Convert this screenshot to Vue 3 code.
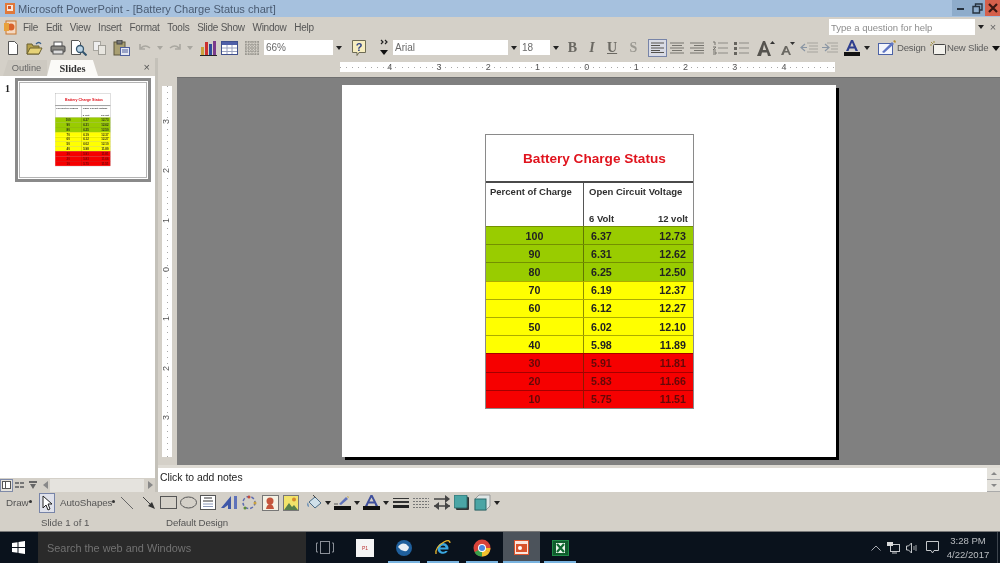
<script setup>
const rows = [
  ['100', '6.37', '12.73', 'green'], ['90', '6.31', '12.62', 'green'], ['80', '6.25', '12.50', 'green'],
  ['70', '6.19', '12.37', 'yellow'], ['60', '6.12', '12.27', 'yellow'], ['50', '6.02', '12.10', 'yellow'],
  ['40', '5.98', '11.89', 'yellow'], ['30', '5.91', '11.81', 'red'], ['20', '5.83', '11.66', 'red'], ['10', '5.75', '11.51', 'red']
]
const menus = ['File', 'Edit', 'View', 'Insert', 'Format', 'Tools', 'Slide Show', 'Window', 'Help']
const hnums = ['4', '3', '2', '1', '0', '1', '2', '3', '4']
const vnums = ['3', '2', '1', '0', '1', '2', '3']
</script>

<template>
  <div class="screen">
    <header class="titlebar">
      <svg class="tapp" width="10" height="11" viewBox="0 0 10 11"><rect width="10" height="11" fill="#e0793a"/><rect x="2" y="2" width="6" height="6" fill="#f7e6d8"/><rect x="3" y="3" width="3" height="3" fill="#d2552a"/></svg>
      <span class="ttext">Microsoft PowerPoint - [Battery Charge Status chart]</span>
      <div class="winbtns">
        <span class="wb wmin"><i class="minbar"></i></span>
        <span class="wb wmax"><svg width="11" height="11" viewBox="0 0 11 11"><path d="M3.5 3V1h6.5v6H8M1 3.5h6.5V10H1z" fill="none" stroke="#26323f" stroke-width="1.4"/></svg></span>
        <span class="wb wclose"><svg width="10" height="10" viewBox="0 0 10 10"><path d="M1 1l8 8M9 1l-8 8" stroke="#3a1712" stroke-width="2.2"/></svg></span>
      </div>
    </header>

    <nav class="menubar">
      <svg class="mapp" width="14" height="15" viewBox="0 0 14 15"><rect x="2" y="1" width="10" height="13" fill="#f4d9c2" stroke="#c9762f"/><circle cx="7" cy="7" r="3.5" fill="#d9622c"/><rect x="0" y="3" width="5" height="8" fill="#e8a13a"/></svg>
      <div class="menus"><span v-for="m in menus" :key="m" class="menu">{{ m }}</span></div>
      <div class="helpbox"><span class="helptext">Type a question for help</span></div>
      <span class="dd helpdd"><i class="tri"></i></span>
      <span class="helpx">×</span>
    </nav>

    <div class="toolbar">
      <svg class="g8" width="10" height="14" viewBox="0 0 10 14"><path d="M.5.5h6l3 3v10H.5z" fill="#fff" stroke="#555"/></svg>
      <svg class="g8" width="17" height="14" viewBox="0 0 17 14"><path d="M1 3h5l1 2h6v8H1z" fill="#b7a24c" stroke="#6b6130"/><path d="M1 13l3-6h12l-3 6z" fill="#e6d277" stroke="#6b6130"/><path d="M10 3q3-3 5 0" fill="none" stroke="#39608c" stroke-width="1.3"/></svg>
      <svg class="g7" width="16" height="14" viewBox="0 0 16 14"><rect x="4" y="1" width="8" height="5" fill="#fff" stroke="#555"/><rect x="1" y="5" width="14" height="6" rx="1" fill="#8c8a84" stroke="#444"/><rect x="3" y="9" width="10" height="4" fill="#ddd" stroke="#555"/></svg>
      <svg class="g4" width="17" height="16" viewBox="0 0 17 16"><path d="M1.500.5h7l2 2v12h-9z" fill="#fff" stroke="#555"/><circle cx="10" cy="9" r="3.500" fill="#bcd5e6" stroke="#35566f" stroke-width="1.300"/><path d="M12.500 11.500l4 4" stroke="#35566f" stroke-width="2"/></svg>
      <svg class="g6" width="13" height="14" viewBox="0 0 13 14"><rect x=".5" y=".5" width="7" height="9" fill="#eee" stroke="#a8a69f"/><rect x="5.500" y="4.500" width="7" height="9" fill="#e8e6e0" stroke="#a09e97"/></svg>
      <svg class="g7" width="17" height="16" viewBox="0 0 17 16"><rect x="1" y="2" width="11" height="13" fill="#a99f72" stroke="#5c573f"/><rect x="4" y="0" width="5" height="4" fill="#777" stroke="#444"/><rect x="7.500" y="7.500" width="9" height="8" fill="#e4e7f2" stroke="#4f5f9c"/><path d="M9 10h6M9 12h6" stroke="#4f5f9c"/></svg>
      <svg class="g9" width="13" height="10" viewBox="0 0 13 10"><path d="M1 1v5h5M2 5q4-4 9 0" fill="none" stroke="#a9a7a0" stroke-width="1.600"/></svg>
      <i class="tri dim g5"></i>
      <svg class="g5" width="13" height="10" viewBox="0 0 13 10"><path d="M12 1v5H7M11 5Q7 1 2 5" fill="none" stroke="#a9a7a0" stroke-width="1.600"/></svg>
      <i class="tri dim g6"></i>
      <svg class="g7" width="17" height="16" viewBox="0 0 17 16"><rect x="1" y="7" width="3" height="8" fill="#c9a13b"/><rect x="5" y="2" width="3" height="13" fill="#cc2f2f"/><rect x="9" y="4" width="3" height="11" fill="#2f4c9c"/><rect x="13" y="1" width="3" height="14" fill="#7a3a8c"/><path d="M0 15.500h17" stroke="#222"/></svg>
      <svg class="g4" width="17" height="14" viewBox="0 0 17 14"><rect x=".5" y=".5" width="16" height="13" fill="#fff" stroke="#3f4f8c"/><rect x="1" y="1" width="15" height="3" fill="#4f5fa8"/><path d="M1 7h15M1 10.500h15M6 4v9M11 4v9" stroke="#9aa2c0"/></svg>
      <svg class="g7" width="14" height="14" viewBox="0 0 14 14"><path d="M1 0v14M4 0v14M7 0v14M10 0v14M13 0v14M0 1h14M0 4h14M0 7h14M0 10h14M0 13h14" stroke="#86847e" stroke-dasharray="1.500 1"/></svg>
      <div class="combo zoomc g5"><span>66%</span></div><span class="dd"><i class="tri"></i></span>
      <svg class="g7" width="16" height="18" viewBox="0 0 16 18"><path d="M1.500 1.500h13v12H8l-2 3v-3H1.500z" fill="#f6edc0" stroke="#6d6b55"/><text x="8" y="11.500" text-anchor="middle" font-family="Liberation Sans" font-weight="700" font-size="11" fill="#2b3f85">?</text></svg>
      <svg class="g13" width="8" height="17" viewBox="0 0 8 17"><path d="M1 1l2 2-2 2M5 1l2 2-2 2" fill="none" stroke="#222" stroke-width="1.200"/><path d="M0 11h8l-4 5z" fill="#111"/></svg>
      <div class="combo fontc g5"><span>Arial</span></div><span class="dd dd12"><i class="tri"></i></span>
      <div class="combo sizec"><span>18</span></div><span class="dd dd12"><i class="tri"></i></span>
      <b class="fmt fb g5">B</b><i class="fmt fi g9">I</i><span class="fmt fu g10">U</span><span class="fmt fs g11">S</span>
      <span class="alignbox g9"><svg width="13" height="11" viewBox="0 0 13 11"><path d="M0 1h13M0 3.500h9M0 6h13M0 8.500h9M0 10.500h13" stroke="#55534e" stroke-width="1.200"/></svg></span>
      <svg class="g2" width="16" height="12" viewBox="0 0 16 12"><path d="M1 1h14M3 3.500h10M1 6h14M3 8.500h10M1 11h14" stroke="#77756f" stroke-width="1.200"/></svg>
      <svg class="g4" width="16" height="12" viewBox="0 0 16 12"><path d="M1 1h14M5 3.500h10M1 6h14M5 8.500h10M1 11h14" stroke="#77756f" stroke-width="1.200"/></svg>
      <svg class="g7" width="16" height="14" viewBox="0 0 16 14"><path d="M6 2h10M6 7h10M6 12h10" stroke="#8d8b85" stroke-width="1.200"/><path d="M1 1h2v3M1 6h3l-3 3h3M1 11h3v2H1" fill="none" stroke="#77756f"/></svg>
      <svg class="g5" width="16" height="14" viewBox="0 0 16 14"><path d="M6 2h10M6 7h10M6 12h10" stroke="#8d8b85" stroke-width="1.200"/><path d="M1 1h3v3H1zM1 6h3v3H1zM1 11h3v3H1z" fill="#66645e"/></svg>
      <svg class="g8" width="18" height="16" viewBox="0 0 18 16"><path d="M0 16L6 1h2l6 15h-3l-1-3.500H5L4 16zM5.800 10h3.400L7 4.500z" fill="#55534e"/><path d="M13 4l2.500-3L18 4z" fill="#333"/></svg>
      <svg class="g5" width="15" height="14" viewBox="0 0 15 14"><path d="M1 14L5 5h2l4 9H9l-1-2.500H4.500L3.500 14zM5.200 10h2.200L6.300 7z" fill="#6a6862"/><path d="M10 1h5l-2.500 3z" fill="#333"/></svg>
      <svg class="g5" width="18" height="13" viewBox="0 0 18 13"><path d="M7 2h11M9 5h9M9 8h9M7 11h11" stroke="#a6a49d" stroke-width="1.200"/><path d="M5 3L1 6.500 5 10M1 6.500h6" fill="none" stroke="#8a96a4" stroke-width="1.200"/></svg>
      <svg class="g4" width="16" height="13" viewBox="0 0 16 13"><path d="M5 2h11M9 5h7M9 8h7M5 11h11" stroke="#a6a49d" stroke-width="1.200"/><path d="M3 3l4 3.500L3 10M0 6.500h7" fill="none" stroke="#8a96a4" stroke-width="1.200"/></svg>
      <svg class="g6" width="16" height="16" viewBox="0 0 16 16"><path d="M2 11L7 0h2l5 11h-2.500l-1-2.500h-5L4.500 11zM6.300 6.500h3.400L8 2.500z" fill="#2f3f8f"/><rect y="12" width="16" height="4" fill="#111"/></svg>
      <i class="tri g4"></i>
      <svg class="g8" width="19" height="17" viewBox="0 0 19 17"><rect x=".5" y="4.500" width="14" height="11" fill="#f3f5fb" stroke="#4c62a6"/><path d="M4 13L14 3l2 2L6 14z" fill="#5f75c4"/><path d="M15 2l2-1 1 2-1 1z" fill="#b58b2c"/></svg>
      <span class="tbtext design">Design</span>
      <svg class="g5" width="16" height="14" viewBox="0 0 16 14"><rect x="3.500" y="3.500" width="12" height="10" rx="1" fill="#f2f1ec" stroke="#444"/><path d="M1 1l2 2M4 0v2M0 4h2" stroke="#a08f3e"/></svg>
      <span class="tbtext newslide g1">New Slide</span>
      <svg class="g5" width="8" height="6" viewBox="0 0 8 6"><path d="M0 1h8L4 6z" fill="#111"/></svg>
    </div>

    <main class="middle">
      <aside class="leftpane">
        <div class="tabs">
          <span class="tab outline">Outline</span>
          <span class="tab slides">Slides</span>
          <span class="tabx">×</span>
        </div>
        <div class="thumbs">
          <span class="thumbnum">1</span>
          <div class="thumb">
            <div class="chart mini">
              <div class="c-title">Battery Charge Status</div>
              <div class="c-head"><div class="c-h1">Percent of Charge</div><div class="c-h2"><div>Open Circuit Voltage</div><div class="c-volts"><span>6 Volt</span><span>12 volt</span></div></div></div>
              <div v-for="r in rows" :key="r[0]" class="c-row" :class="r[3]"><span class="c-pct">{{ r[0] }}</span><span class="c-six">{{ r[1] }}</span><span class="c-twelve">{{ r[2] }}</span></div>
            </div>
          </div>
        </div>
        <div class="viewbar">
          <span class="vb vbon"><svg width="9" height="8" viewBox="0 0 9 8"><rect x=".5" y=".5" width="8" height="7" fill="#fff" stroke="#555"/><path d="M3.500 1v6" stroke="#555"/></svg></span>
          <span class="vb"><svg width="9" height="8" viewBox="0 0 9 8"><path d="M0 1h4v2H0zM5 1h4v2H5zM0 5h4v2H0zM5 5h4v2H5z" fill="#777"/></svg></span>
          <span class="vb"><svg width="8" height="8" viewBox="0 0 8 8"><path d="M0 0h8v2H0zM1 3h6L4 8z" fill="#666"/></svg></span>
          <span class="sb-arrow"><i class="tl"></i></span>
          <span class="sb-track"></span>
          <span class="sb-arrow"><i class="tr"></i></span>
        </div>
      </aside>

      <section class="rightpane">
        <div class="hruler-row">
          <div class="hruler"><span v-for="(n, i) in hnums" :key="i" class="hn">{{ n }}</span></div>
        </div>
        <div class="work-row">
          <div class="vstrip">
            <div class="vruler"><span v-for="(n, i) in vnums" :key="i" class="vn"><em>{{ n }}</em></span></div>
          </div>
          <div class="workspace">
            <div class="slide">
              <div class="chart">
                <div class="c-title">Battery Charge Status</div>
                <div class="c-head"><div class="c-h1">Percent of Charge</div><div class="c-h2"><div>Open Circuit Voltage</div><div class="c-volts"><span>6 Volt</span><span>12 volt</span></div></div></div>
                <div v-for="r in rows" :key="r[0]" class="c-row" :class="r[3]"><span class="c-pct">{{ r[0] }}</span><span class="c-six">{{ r[1] }}</span><span class="c-twelve">{{ r[2] }}</span></div>
              </div>
            </div>
          </div>
        </div>
        <div class="splitter"></div>
        <div class="notes">
          <span class="notestext">Click to add notes</span>
          <div class="notes-sb"><span class="nsb"><i class="tu"></i></span><span class="nsb"><i class="td"></i></span></div>
        </div>
      </section>
    </main>

    <div class="drawbar">
      <span class="dtext d-draw">Draw</span><i class="caret"></i>
      <span class="cursorbox"><svg width="11" height="16" viewBox="0 0 11 16"><path d="M1 1v12l3-3 2 5 2-1-2-5h4z" fill="#fff" stroke="#222"/></svg></span>
      <span class="dtext d-auto">AutoShapes</span><i class="caret"></i>
      <svg class="g6" width="12" height="12" viewBox="0 0 12 12"><path d="M0 0l12 12" stroke="#666"/></svg>
      <svg class="g10" width="12" height="12" viewBox="0 0 12 12"><path d="M0 0l8 8" stroke="#444"/><path d="M5 9l4-4 3 7z" fill="#333"/></svg>
      <svg class="g5" width="17" height="13" viewBox="0 0 17 13"><rect x=".5" y=".5" width="16" height="12" fill="none" stroke="#555"/></svg>
      <svg class="g3" width="17" height="13" viewBox="0 0 17 13"><ellipse cx="8.500" cy="6.500" rx="8" ry="5.500" fill="none" stroke="#555"/></svg>
      <svg class="g3" width="17" height="15" viewBox="0 0 17 15"><rect x=".5" y=".5" width="15" height="14" fill="#fff" stroke="#555"/><path d="M4 3h8M3 6h10" stroke="#333"/><path d="M3 9h10M3 11.500h10" stroke="#8c99b8"/></svg>
      <svg class="g4" width="17" height="15" viewBox="0 0 17 15"><path d="M0 13L10 1v13H7V10L3 13z" fill="#3f58a8"/><rect x="13" y="1" width="3" height="13" fill="#5f72ba"/></svg>
      <svg class="g3" width="16" height="15" viewBox="0 0 16 15"><g fill="none" stroke-width="1.500" stroke-dasharray="3 2"><circle cx="8" cy="7.500" r="6" stroke="#5e6cb0"/></g><circle cx="8" cy="2" r="1.500" fill="#c64a3a"/><circle cx="14" cy="8" r="1.500" fill="#c9a13b"/><circle cx="4" cy="13" r="1.500" fill="#5e8c3a"/></svg>
      <svg class="g5" width="17" height="16" viewBox="0 0 17 16"><rect x=".5" y=".5" width="16" height="15" fill="#f4f1e4" stroke="#777"/><circle cx="8" cy="6" r="3.500" fill="#c5563c"/><path d="M4 14q1-5 4-5t4 5z" fill="#c5563c"/></svg>
      <svg class="g4" width="16" height="16" viewBox="0 0 16 16"><rect x=".5" y=".5" width="15" height="15" fill="#f2e36a" stroke="#777"/><path d="M1 15l5-7 3 4 2-2 4 5z" fill="#58804a"/><circle cx="11" cy="4.500" r="2" fill="#d68a2a"/></svg>
      <svg class="g8" width="15" height="15" viewBox="0 0 15 15"><path d="M2 7l6-5 6 6-6 5z" fill="#cfe0ea" stroke="#4a6b86"/><path d="M1 7q-2 4 1 5z" fill="#5a87b5"/><path d="M6 0l3 3" stroke="#444"/></svg>
      <i class="tri g3"></i>
      <svg class="g3" width="17" height="15" viewBox="0 0 17 15"><path d="M5 9L12 2l2 2-7 6z" fill="#5f72ba"/><path d="M13 1l2 1-1 1z" fill="#c0a030"/><path d="M0 9h4" stroke="#555"/><rect y="11" width="17" height="4" fill="#111"/></svg>
      <i class="tri g3"></i>
      <svg class="g3" width="17" height="15" viewBox="0 0 17 15"><path d="M2 11L7.500 0h2L15 11h-2.500l-1-2.500h-6L4.500 11zM6.400 6.500h4.200L8.500 2.500z" fill="#3f4f9c"/><rect y="11" width="17" height="4" fill="#111"/></svg>
      <i class="tri g3"></i>
      <svg class="g4" width="16" height="12" viewBox="0 0 16 12"><path d="M0 1.500h16" stroke="#333"/><path d="M0 5h16" stroke="#333" stroke-width="2"/><path d="M0 9.500h16" stroke="#222" stroke-width="3"/></svg>
      <svg class="g4" width="16" height="12" viewBox="0 0 16 12"><path d="M0 1.500h16M0 4.500h16M0 7.500h16M0 10.500h16" stroke="#777" stroke-dasharray="2 1"/></svg>
      <svg class="g5" width="16" height="15" viewBox="0 0 16 15"><path d="M0 4h13M0 11h16" stroke="#444" stroke-width="1.500"/><path d="M11 0l5 4-5 4zM5 7l-5 4 5 4zM11 7l5 4-5 4z" fill="#444"/></svg>
      <svg class="g4" width="15" height="15" viewBox="0 0 15 15"><rect x="2" y="2" width="13" height="13" rx="1" fill="#333"/><rect width="13" height="13" rx="1" fill="#4aa5a5" stroke="#2a6a6a"/></svg>
      <svg class="g5" width="17" height="17" viewBox="0 0 17 17"><path d="M1 5l4-4h11v11l-4 4H1z" fill="#dfe6e6" stroke="#999"/><rect x="1" y="5" width="11" height="11" fill="#4aa5a5" stroke="#2a6a6a"/></svg>
      <i class="tri g3"></i>
    </div>

    <div class="statusbar">
      <span class="st st1">Slide 1 of 1</span>
      <span class="st st2">Default Design</span>
    </div>

    <footer class="taskbar">
      <svg class="winlogo" width="13" height="13" viewBox="0 0 13 13"><path d="M0 2l5.500-.8V6H0zM6.500 1L13 0v6H6.500zM0 7h5.500v4.800L0 11zM6.500 7H13v6l-6.500-1z" fill="#fff"/></svg>
      <div class="search"><span>Search the web and Windows</span></div>
      <svg class="taskview" width="18" height="14" viewBox="0 0 18 14"><rect x="4.500" y=".5" width="9" height="12" fill="none" stroke="#8b9098"/><path d="M2 2H.5v9H2M16 2h1.500v9H16" fill="none" stroke="#8b9098"/></svg>
      <span class="app a1"><span class="whiteapp">P1</span></span>
      <span class="app a2 running"><svg width="18" height="18" viewBox="0 0 18 18"><circle cx="9" cy="9" r="8" fill="#1f5f9c"/><path d="M3 8q3-5 8-3l3 3q-1 5-5 4T3 8z" fill="#e8eef4"/></svg></span>
      <span class="app a3 running"><svg width="18" height="18" viewBox="0 0 18 18"><path d="M9 4a5.500 5.500 0 0 0-5.500 5.500A5.500 5.500 0 0 0 13.800 12h-2.600A3 3 0 0 1 6.200 10.500H14.500A5.500 5.500 0 0 0 9 4zM6.300 8.500a2.800 2.800 0 0 1 5.400 0z" fill="#3aa7e0"/><path d="M2 15Q1 8 10 3q6-3 6 1" fill="none" stroke="#e8b52c" stroke-width="1.300"/></svg></span>
      <span class="app a4 running"><svg width="18" height="18" viewBox="0 0 18 18"><circle cx="9" cy="9" r="8.500" fill="#d8433a"/><path d="M9 9L1.600 13.200A8.500 8.500 0 0 0 9 17.500z" fill="#3aa04a"/><path d="M9 9l7.400 4.200A8.500 8.500 0 0 1 9 17.500z" fill="#f2c22e"/><path d="M9 9h8.400a8.500 8.500 0 0 1-1 4.200z" fill="#f2c22e"/><circle cx="9" cy="9" r="4" fill="#fff"/><circle cx="9" cy="9" r="3" fill="#4a87e0"/></svg></span>
      <span class="app a5 running active"><svg width="15" height="15" viewBox="0 0 15 15"><rect x=".5" y=".5" width="14" height="14" fill="#fbe6dd" stroke="#d9532c"/><rect x="2" y="4" width="11" height="8" fill="#d9532c"/><circle cx="6" cy="8" r="2" fill="#fff"/></svg></span>
      <span class="app a6 running"><svg width="17" height="16" viewBox="0 0 17 16"><rect x=".5" y=".5" width="16" height="15" fill="#0f5c2c" stroke="#1f8a46"/><path d="M4 3h9v10H4z" fill="#e8f4ea"/><path d="M5 4l7 8M12 4l-7 8" stroke="#0f6a30" stroke-width="2.200"/></svg></span>
      <div class="tray">
        <svg width="10" height="6" viewBox="0 0 10 6"><path d="M.5 5.500L5 1l4.500 4.500" fill="none" stroke="#a5a9ae"/></svg>
        <svg class="g6" width="13" height="12" viewBox="0 0 13 12"><rect x="3.500" y="2.500" width="9" height="7" fill="none" stroke="#c4c7ca"/><rect x="0" y="0" width="6" height="4" fill="#d8d9da"/><path d="M5 11h5" stroke="#c4c7ca"/></svg>
        <svg class="g6" width="11" height="12" viewBox="0 0 11 12"><path d="M.5 4v4h2l3 3V1l-3 3z" fill="none" stroke="#c4c7ca"/><path d="M8 4v4M10 3v6" stroke="#9da1a5"/></svg>
        <svg class="g9" width="13" height="13" viewBox="0 0 13 13"><path d="M.5.500h12v9H8l-1.500 2.500L5 9.500H.5z" fill="none" stroke="#c4c7ca"/></svg>
        <div class="clock"><span>3:28 PM</span><span>4/22/2017</span></div>
        <i class="showdesk"></i>
      </div>
    </footer>
  </div>
</template>

<style scoped>
.screen { width: 1000px; height: 563px; overflow: hidden; display: flex; flex-direction: column; background: #d4d0c8; font-family: "Liberation Sans", Arial, sans-serif; filter: blur(.45px); }
.g1 { margin-left: 1px; } .g2 { margin-left: 2px; } .g3 { margin-left: 3px; } .g4 { margin-left: 4px; } .g5 { margin-left: 5px; } .g6 { margin-left: 6px; } .g7 { margin-left: 7px; } .g8 { margin-left: 8px; } .g9 { margin-left: 9px; } .g10 { margin-left: 10px; } .g11 { margin-left: 11px; } .g13 { margin-left: 13px; }
svg { flex: none; display: block; }
.tri { display: block; flex: none; width: 0; height: 0; border-left: 3.5px solid transparent; border-right: 3.5px solid transparent; border-top: 4px solid #222; }
.tri.dim { border-left-width: 3px; border-right-width: 3px; border-top-color: #a9a7a0; }

.titlebar { height: 17px; flex: none; background: #a6c1de; display: flex; align-items: center; padding-left: 5px; }
.ttext { margin-left: 3px; font-size: 11.1px; color: #4a5b72; white-space: nowrap; }
.winbtns { margin-left: auto; display: flex; align-self: flex-start; height: 16px; }
.wb { width: 16px; height: 16px; display: flex; align-items: center; justify-content: center; }
.wmin { width: 17px; background: #8eaccb; }
.minbar { width: 7px; height: 2px; background: #26323f; margin-top: 2px; }
.wmax { background: #8eaccb; }
.wclose { background: #d5604b; width: 15px; }

.menubar { height: 20px; flex: none; display: flex; align-items: center; padding-left: 4px; }
.mapp { margin-right: 5px; }
.menus { display: flex; gap: 7.75px; }
.menu { font-size: 10px; letter-spacing: -.25px; color: #555; white-space: nowrap; }
.helpbox { margin-left: auto; width: 146px; height: 16px; background: #fff; display: flex; align-items: center; padding-left: 2px; box-sizing: border-box; }
.helptext { font-size: 9.5px; color: #8c8c8c; white-space: nowrap; }
.helpdd { height: 16px; width: 10px; }
.helpx { width: 14px; text-align: center; font-size: 11px; color: #666; }
.dd { flex: none; width: 11px; height: 15px; display: flex; align-items: center; justify-content: center; }
.dd12 { width: 12px; }

.toolbar { height: 21px; flex: none; display: flex; align-items: center; }
.combo { flex: none; height: 15px; background: #fff; display: flex; align-items: center; padding-left: 2px; box-sizing: border-box; font-size: 10px; color: #6a6a6a; }
.zoomc { width: 69px; }
.fontc { width: 115px; }
.sizec { width: 30px; }
.fmt { flex: none; text-align: center; font-family: "Liberation Serif", serif; font-size: 14px; line-height: 16px; color: #6a6862; }
.fb { width: 11px; font-weight: 700; }
.fi { width: 10px; font-weight: 700; }
.fu { width: 10px; font-weight: 700; text-decoration: underline; }
.fs { width: 11px; color: #9b9992; font-weight: 700; }
.alignbox { flex: none; width: 19px; height: 18px; box-sizing: border-box; background: #d9dbe4; border: 1px solid #7784a8; display: flex; align-items: center; justify-content: center; }
.tbtext { flex: none; font-size: 9.6px; letter-spacing: -.2px; color: #5c5c5c; white-space: nowrap; }
.design { width: 28px; }
.newslide { width: 40px; }

.middle { flex: none; height: 434px; display: flex; }
.leftpane { width: 155px; flex: none; display: flex; flex-direction: column; border-right: 3px solid #c4c1b9; }
.tabs { height: 18px; flex: none; display: flex; align-items: flex-end; padding-left: 3px; }
.tab { height: 16px; display: flex; align-items: center; justify-content: center; box-sizing: border-box; }
.outline { width: 44px; padding-left: 3px; font-size: 9.3px; color: #666; background: #cdc9c1; clip-path: polygon(5px 0, 100% 0, 100% 100%, 0 100%); }
.slides { width: 51px; font-weight: 700; color: #333; background: #fbfaf7; clip-path: polygon(4px 0, 90% 0, 100% 100%, 0 100%); font-family: "Liberation Serif", serif; font-size: 10.4px; }
.tabx { margin-left: auto; margin-right: 5px; align-self: center; font-size: 11px; color: #555; }
.thumbs { flex: 1; background: #fff; position: relative; padding: 2px 0 0 15px; }
.thumbnum { position: absolute; left: 5px; top: 7px; font-size: 10px; font-weight: 700; color: #222; font-family: "Liberation Serif", serif; }
.thumb { width: 136px; height: 104px; box-sizing: border-box; border: 3px solid #8a8a8a; outline: 1px solid #b4b4b4; outline-offset: -5px; background: #fff; padding: 12px 0 0 37px; overflow: hidden; }
.viewbar { height: 14px; flex: none; display: flex; align-items: center; }
.vb { width: 13px; height: 13px; display: flex; align-items: center; justify-content: center; box-sizing: border-box; }
.vbon { background: #e4e2dc; border: 1px solid #7f8aa8; }
.sb-arrow { width: 10px; height: 13px; display: flex; align-items: center; justify-content: center; background: #d4d0c8; margin-left: 1px; }
.tl { width: 0; height: 0; border: 4px solid transparent; border-right: 5px solid #888; border-left: 0; }
.tr { width: 0; height: 0; border: 4px solid transparent; border-left: 5px solid #888; border-right: 0; }
.sb-track { flex: 1; height: 13px; background: #e5e3de; }

.rightpane { flex: 1; min-width: 0; display: flex; flex-direction: column; }
.hruler-row { height: 19px; flex: none; padding: 4px 0 0 182px; box-sizing: border-box; }
.hruler { width: 495px; height: 10px; background-color: #fff; background-image: repeating-linear-gradient(90deg, #a8a8a8 0 1px, transparent 1px 6.16px); background-size: 100% 1px; background-position: 0 5px; background-repeat: no-repeat; display: flex; padding-left: 25px; box-sizing: border-box; }
.hn { flex: none; width: 49.3px; text-align: center; font-size: 9px; line-height: 10px; color: #555; }
.work-row { flex: none; height: 388px; display: flex; }
.vstrip { width: 19px; flex: none; padding: 9px 0 0 4px; box-sizing: border-box; }
.vruler { width: 10px; height: 371px; background-color: #fff; background-image: repeating-linear-gradient(180deg, #a8a8a8 0 1px, transparent 1px 6.16px); background-size: 1px 100%; background-position: 5px 0; background-repeat: no-repeat; padding-top: 11px; box-sizing: border-box; display: flex; flex-direction: column; }
.vn { flex: none; height: 49.3px; display: flex; align-items: center; justify-content: center; font-size: 9px; color: #555; }
.vn em { font-style: normal; transform: rotate(-90deg); background: #fff; line-height: 9px; }
.workspace { flex: 1; background: #808080; padding: 7px 0 0 165px; box-sizing: border-box; border-top: 1px solid #6f6f6f; }
.slide { width: 494px; height: 372px; background: #fff; box-shadow: 3px 3px 0 #000; box-sizing: border-box; padding: 49px 0 0 143px; }
.splitter { height: 3px; flex: none; background: #dedbd4; }
.notes { height: 24px; flex: none; background: #fff; display: flex; align-items: center; padding-left: 2px; }
.notestext { font-size: 10.4px; color: #222; margin-top: -6px; }
.notes-sb { margin-left: auto; width: 13px; height: 24px; display: flex; flex-direction: column; background: #d4d0c8; }
.nsb { height: 12px; display: flex; align-items: center; justify-content: center; background: #e4e2dc; border-bottom: 1px solid #aaa; box-sizing: border-box; }
.tu { width: 0; height: 0; border: 3px solid transparent; border-bottom: 3px solid #888; border-top: 0; }
.td { width: 0; height: 0; border: 3px solid transparent; border-top: 3px solid #888; border-bottom: 0; }

.chart { width: 209px; box-sizing: border-box; border: 1px solid #8a8a8a; color: #222; font-weight: 700; }
.c-title { height: 48px; box-sizing: border-box; padding: 16px 0 0 37px; color: #e0141e; font-size: 13.6px; line-height: 16px; border-bottom: 2px solid #4a4a4a; white-space: nowrap; }
.c-head { height: 43px; display: flex; font-size: 9.5px; line-height: 11px; color: #303030; }
.c-h1 { width: 98px; flex: none; padding: 3px 0 0 4px; box-sizing: border-box; border-right: 1px solid #555; white-space: nowrap; }
.c-h2 { flex: 1; padding: 3px 0 0 5px; display: flex; flex-direction: column; justify-content: space-between; white-space: nowrap; }
.c-volts { display: flex; justify-content: space-between; padding: 0 5px 2px 0; }
.c-row { height: 18.2px; box-sizing: border-box; display: flex; align-items: center; font-size: 10.7px; border-top: 1px solid rgba(70, 70, 0, .45); color: #222; }
.c-pct { width: 98px; flex: none; text-align: center; align-self: stretch; display: flex; align-items: center; justify-content: center; border-right: 1px solid rgba(50, 50, 0, .55); box-sizing: border-box; }
.c-six { padding-left: 7px; }
.c-twelve { margin-left: auto; padding-right: 7px; }
.green { background: #99cc00; }
.yellow { background: #ffff00; }
.red { background: #f60000; color: #640808; border-top-color: rgba(110, 0, 0, .6); }
.mini { transform: scale(.266); transform-origin: 0 0; }

.drawbar { height: 21px; flex: none; display: flex; align-items: center; padding-left: 6px; }
.dtext { font-size: 9.8px; letter-spacing: -.1px; color: #555; white-space: nowrap; flex: none; }
.d-draw { width: 23px; }
.d-auto { width: 52px; margin-left: 5px; }
.caret { display: block; flex: none; width: 3px; height: 3px; border-radius: 50%; background: #333; margin-top: -3px; }
.cursorbox { flex: none; margin-left: 7px; width: 16px; height: 20px; box-sizing: border-box; background: #dfe1ea; border: 1px solid #7784a8; display: flex; align-items: center; justify-content: center; }
.statusbar { height: 18px; flex: none; display: flex; align-items: center; }
.st { font-size: 9.7px; color: #555; white-space: nowrap; }
.st1 { margin-left: 41px; width: 125px; }
.st2 { letter-spacing: -.1px; }

.taskbar { height: 32px; flex: none; background: #0a121c; display: flex; align-items: center; border-top: 1px solid #777; box-sizing: border-box; }
.winlogo { margin-left: 12px; }
.search { margin-left: 13px; width: 268px; height: 31px; background: #2a2a2a; display: flex; align-items: center; padding-left: 9px; box-sizing: border-box; font-size: 10.9px; color: #727272; white-space: nowrap; flex: none; }
.taskview { margin-left: 10px; }
.app { flex: none; height: 31px; display: flex; align-items: center; justify-content: center; box-sizing: border-box; position: relative; }
.running::after { content: ""; position: absolute; left: 0; right: 0; bottom: 0; height: 2px; background: #79b4e0; }
.a1 { width: 32px; margin-left: 15px; }
.whiteapp { width: 18px; height: 18px; background: #f5f5f5; font-size: 5px; color: #b33; display: flex; align-items: center; justify-content: center; }
.a2 { width: 32px; margin-left: 7px; }
.a3 { width: 32px; margin-left: 7px; }
.a4 { width: 32px; margin-left: 7px; }
.a5 { width: 37px; margin-left: 5px; }
.active { background: #4c535b; }
.a6 { width: 32px; margin-left: 4px; }
.tray { margin-left: auto; display: flex; align-items: center; height: 31px; }
.clock { width: 52px; margin-left: 3px; display: flex; flex-direction: column; align-items: center; gap: 3px; font-size: 9.6px; line-height: 11px; color: #b9bcc0; white-space: nowrap; }
.showdesk { display: block; width: 1px; height: 31px; background: #3d444d; margin: 0 2px 0 3px; }
</style>
